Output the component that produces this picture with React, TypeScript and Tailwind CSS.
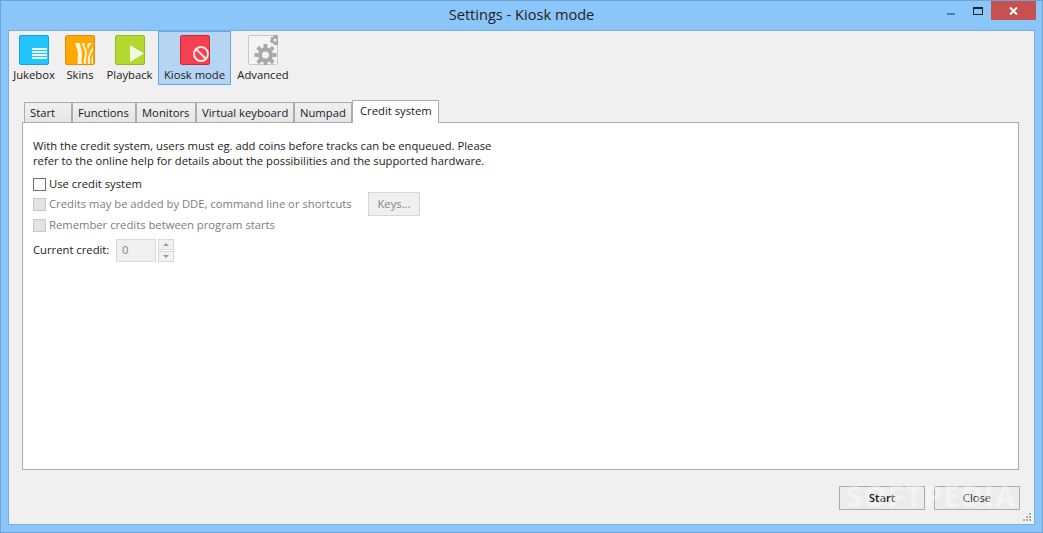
import React from "react";

const font = { fontFamily: '"Open Sans", "Noto Sans", sans-serif' };

function JukeboxIcon() {
  return (
    <svg width="30" height="30" viewBox="0 0 30 30">
      <rect x="0.5" y="0.5" width="29" height="29" rx="1.5" fill="#22c5ff" stroke="#1a9fe0" />
      <g fill="#e8f8ff">
        <rect x="13" y="13" width="15" height="2" />
        <rect x="13" y="16" width="15" height="2" />
        <rect x="13" y="19" width="15" height="2" />
        <rect x="13" y="22" width="15" height="2" />
      </g>
    </svg>
  );
}

function SkinsIcon() {
  return (
    <svg width="30" height="30" viewBox="0 0 30 30">
      <rect x="0.5" y="0.5" width="29" height="29" rx="1.5" fill="#ffa800" stroke="#e58a10" />
      <g fill="#fff3d9">
        <path d="M10 8h5c0 4 2 6 2 10s-1 7 0 11h-4c-1-4 0-7 0-10s-2-7-3-11Z" />
        <path d="M17 8h3c-2 3 2 6 2 10s-2 7-1 11h-2c-1-4 1-7 1-11s-3-7-3-10Z" />
        <path d="M23 8h5c-3 1-4 4-5 7-1-2-1-5 0-7Z" />
        <path d="M28 12v4c-2 2-3 4-3 7s0 4 0 6h-2c-1-3 0-7 1-10s2-5 4-7Z" />
        <path d="M28 20v9h-1c-1-3-1-6 1-9Z" />
      </g>
    </svg>
  );
}

function PlaybackIcon() {
  return (
    <svg width="30" height="30" viewBox="0 0 30 30">
      <rect x="0.5" y="0.5" width="29" height="29" rx="1.5" fill="#b2d92e" stroke="#94b828" />
      <path d="M15 10 L29 18.5 L15 27 Z" fill="#f4fadf" />
    </svg>
  );
}

function KioskIcon() {
  return (
    <svg width="30" height="30" viewBox="0 0 30 30">
      <rect x="0.5" y="0.5" width="29" height="29" rx="1.5" fill="#f5404f" stroke="#c92a3a" />
      <circle cx="21" cy="19" r="7" fill="none" stroke="#fde8ea" strokeWidth="2" />
      <path d="M16.5 14.5 L25.5 23.5" stroke="#fde8ea" strokeWidth="2" />
    </svg>
  );
}

function AdvancedIcon() {
  const teeth = [0, 45, 90, 135, 180, 225, 270, 315];
  return (
    <svg width="30" height="30" viewBox="0 0 30 30">
      <rect x="0.5" y="0.5" width="29" height="29" rx="1.5" fill="#f4f4f4" stroke="#c9c9c9" />
      <g fill="#a9a9a9">
        {teeth.map((a) => (
          <rect key={a} x="15.5" y="9" width="4" height="4" transform={`rotate(${a} 17.5 20)`} />
        ))}
        <path fillRule="evenodd" d="M17.5 12.5a7.5 7.5 0 1 0 0 15a7.5 7.5 0 1 0 0-15ZM17.5 16.5a3.5 3.5 0 1 1 0 7a3.5 3.5 0 1 1 0-7Z" />
        <path d="M26 0h4v10h-4l-1-2-2 0-1-2 1-2-1-1 2-1 1 0Z" />
      </g>
      <circle cx="27" cy="5" r="1.5" fill="#f4f4f4" />
    </svg>
  );
}

const toolbar = [
  { label: "Jukebox", icon: <JukeboxIcon />, cls: "w-[50px]" },
  { label: "Skins", icon: <SkinsIcon />, cls: "w-[42px]" },
  { label: "Playback", icon: <PlaybackIcon />, cls: "w-[57px]" },
  { label: "Kiosk mode", icon: <KioskIcon />, cls: "w-[73px] bg-[#b5d5f3] border border-[#66a7e8]", active: true },
  { label: "Advanced", icon: <AdvancedIcon />, cls: "w-[64px]" },
];

const tabs = [
  { label: "Start", cls: "w-[48px]" },
  { label: "Functions", cls: "w-[64px]" },
  { label: "Monitors", cls: "w-[60px]" },
  { label: "Virtual keyboard", cls: "w-[98px]" },
  { label: "Numpad", cls: "w-[58px]" },
];

function Check({ disabled }: { disabled?: boolean }) {
  return (
    <span
      className={
        disabled
          ? "w-[13px] h-[13px] shrink-0 border border-[#c8c8c8] bg-[#e3e3e3]"
          : "w-[13px] h-[13px] shrink-0 border border-[#707070] bg-white"
      }
    />
  );
}

export default function App() {
  return (
    <div
      className="relative w-[1043px] h-[533px] overflow-hidden flex flex-col bg-[#8bc6fb] border border-[#6fa3d6] text-[11.25px] leading-[16px] text-[#1a1a1a]"
      style={font}
    >
      {/* title bar */}
      <div className="relative h-[29px] shrink-0 flex items-center justify-center text-[14.6px] text-[#222]">
        <span className="-mt-[3px]">Settings - Kiosk mode</span>
        <div className="absolute right-[6px] top-0 flex items-start">
          <div className="w-[8px] h-[2px] mt-[12px] mr-[18px] bg-[#5b7d9c]" />
          <div className="w-[10px] h-[8px] mt-[6px] mr-[8px] border border-[#222] border-t-[2px]" />
          <div className="w-[45px] h-[19px] bg-[#c75050] flex items-center justify-center text-white">
            <svg width="9" height="8" viewBox="0 0 9 8">
              <path d="M1 0.5 L8 7.5 M8 0.5 L1 7.5" stroke="#fff" strokeWidth="2" />
            </svg>
          </div>
        </div>
      </div>

      {/* client area */}
      <div className="relative flex-1 mx-[7px] mb-[7px] border border-[#78aee0] bg-[#f0f0f0] flex flex-col">
        <div className="flex h-[54px]">
          {toolbar.map((t) => (
            <div
              key={t.label}
              className={`flex flex-col items-center shrink-0 ${t.active ? "pt-[3px]" : "pt-[4px]"} ${t.cls}`}
            >
              {t.icon}
              <span className="mt-[2px] whitespace-nowrap">{t.label}</span>
            </div>
          ))}
        </div>

        {/* tab strip */}
        <div className="flex items-end h-[37px] pl-[15px]">
          {tabs.map((t) => (
            <div
              key={t.label}
              className={`h-[21px] -mb-[1px] pl-[5px] pt-[2px] shrink-0 border border-b-0 border-l-[#acacac] border-t-[#acacac] border-r-[#acacac] bg-gradient-to-b from-[#f0f0f0] to-[#e5e5e5] whitespace-nowrap ${t.cls}`}
            >
              {t.label}
            </div>
          ))}
          <div className="relative z-10 h-[23px] w-[87px] -mb-[1px] pl-[7px] pt-[2px] shrink-0 border border-b-0 border-[#acacac] bg-white whitespace-nowrap">
            Credit system
          </div>
        </div>

        {/* panel */}
        <div className="h-[348px] ml-[13px] mr-[15px] bg-white border border-[#acacac] pl-[10px] pt-[15px]">
          <p className="leading-[15px] text-[#1a1a1a]">
            With the credit system, users must eg. add coins before tracks can be enqueued. Please
            <br />
            refer to the online help for details about the possibilities and the supported hardware.
          </p>
          <label className="flex items-center gap-[3px] mt-[8px] h-[16px]">
            <Check />
            <span>Use credit system</span>
          </label>
          <div className="flex items-center h-[24px] text-[#7d7d7d]">
            <Check disabled />
            <span className="ml-[3px] w-[305px] whitespace-nowrap">Credits may be added by DDE, command line or shortcuts</span>
            <div className="ml-[14px] w-[52px] h-[24px] flex items-center justify-center border border-[#d6d6d6] bg-[#efefef] text-[#838383]">
              Keys...
            </div>
          </div>
          <div className="flex items-center gap-[3px] h-[16px] mt-[1px] text-[#7d7d7d]">
            <Check disabled />
            <span>Remember credits between program starts</span>
          </div>
          <div className="flex items-center h-[24px] mt-[5px]">
            <span className="w-[76px] whitespace-nowrap">Current credit:</span>
            <div className="ml-[7px] w-[40px] h-[23px] pl-[5px] flex items-center border border-[#d9d9d9] bg-[#f0f0f0] text-[#838383]">
              0
            </div>
            <div className="ml-[2px] w-[16px] h-[23px] flex flex-col gap-px">
              <div className="flex-1 flex items-center justify-center border border-[#d9d9d9] bg-[#f2f2f2]">
                <span className="w-0 h-0 border-x-[3px] border-x-transparent border-b-[3px] border-b-[#9a9a9a]" />
              </div>
              <div className="flex-1 flex items-center justify-center border border-[#d9d9d9] bg-[#f2f2f2]">
                <span className="w-0 h-0 border-x-[3px] border-x-transparent border-t-[3px] border-t-[#9a9a9a]" />
              </div>
            </div>
          </div>
        </div>

        {/* bottom buttons */}
        <div className="flex justify-end gap-[9px] mt-[16px] mr-[14px]">
          <div className="w-[86px] h-[24px] flex items-center justify-center border border-[#acacac] bg-[#ececec] font-semibold text-[#111]">
            Start
          </div>
          <div className="w-[86px] h-[24px] flex items-center justify-center border border-[#acacac] bg-[#ececec]">
            Close
          </div>
        </div>

        {/* resize grip */}
        <svg className="absolute right-[2px] bottom-[2px]" width="9" height="9" viewBox="0 0 9 9" fill="#a8a8a8">
          <rect x="6" y="0" width="2" height="2" />
          <rect x="3" y="3" width="2" height="2" />
          <rect x="6" y="3" width="2" height="2" />
          <rect x="0" y="6" width="2" height="2" />
          <rect x="3" y="6" width="2" height="2" />
          <rect x="6" y="6" width="2" height="2" />
        </svg>
      </div>

      {/* watermark */}
      <div className="absolute left-[845px] top-[475px] text-[29px] leading-[40px] font-bold tracking-[1.5px] text-white/40 whitespace-nowrap pointer-events-none">
        SOFTPEDIA
      </div>
    </div>
  );
}
